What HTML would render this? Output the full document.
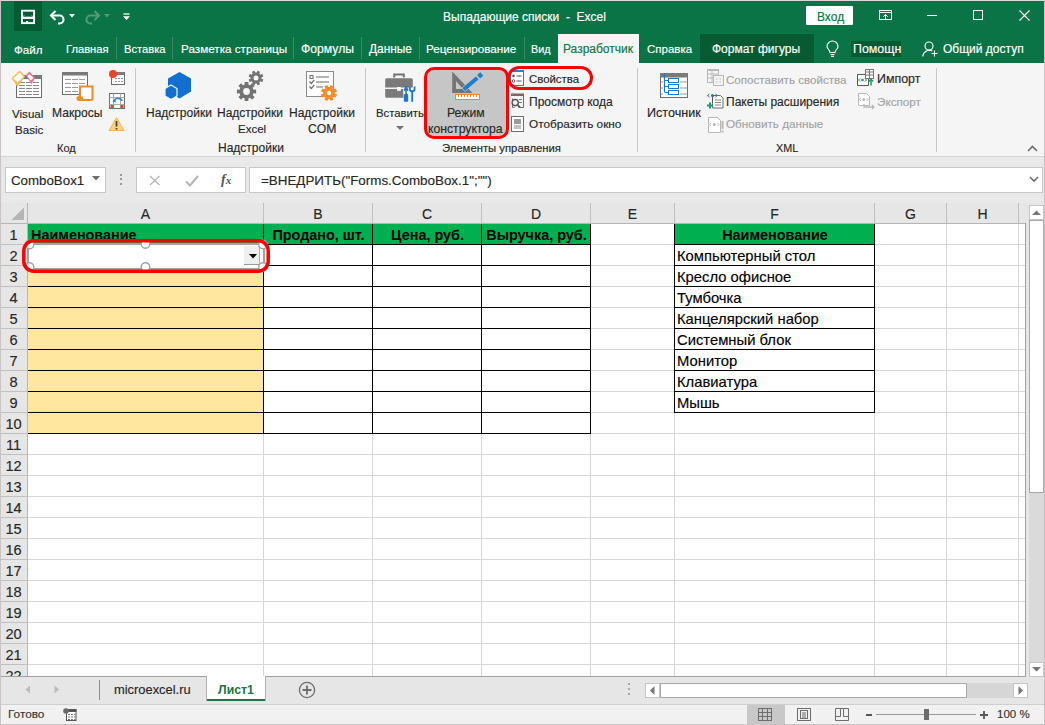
<!DOCTYPE html>
<html><head><meta charset="utf-8">
<style>
*{box-sizing:border-box}
html,body{margin:0;padding:0}
body{width:1045px;height:725px;overflow:hidden;position:relative;background:#e9e9e9;font-family:"Liberation Sans",sans-serif;color:#262626}
.a{position:absolute}
.t{position:absolute;white-space:nowrap;line-height:1;-webkit-text-stroke:0.15px currentColor}
.t[style*="font-weight:700"]{-webkit-text-stroke:0}
svg{overflow:visible}
</style></head><body>
<div class="a" style="left:0px;top:0px;width:1045px;height:725px;background:#e9e9e9;"></div>
<div class="a" style="left:0px;top:0px;width:1045px;height:1px;background:#e2d6dc;"></div>
<div class="a" style="left:0px;top:0px;width:1px;height:725px;background:#c9c3c6;"></div>
<div class="a" style="left:1044px;top:0px;width:1px;height:725px;background:#c9c3c6;"></div>
<div class="a" style="left:0px;top:724px;width:1045px;height:1px;background:#c9c3c6;"></div>
<div class="a" style="left:1px;top:1px;width:1043px;height:62px;background:#0b7447;"></div>
<div class="a" style="left:14px;top:1px;width:28px;height:30px;background:#075b33;"></div>
<svg class="a" style="left:20px;top:9px" width="16" height="16"><rect x="2" y="1.7" width="12.1" height="12.4" fill="none" stroke="#fff" stroke-width="1.9"/><rect x="1" y="7.7" width="14" height="2.3" fill="#fff"/><rect x="6" y="12" width="2.2" height="3" fill="#fff"/><path d="M3 7.7l1.2-1.3M13 7.7l-1.2-1.3" stroke="#fff" stroke-width="0.8"/></svg>
<svg class="a" style="left:49px;top:9px" width="17" height="15"><path d="M2.5 6.5h8a4 4 0 0 1 0 8h-1.5" fill="none" stroke="#fff" stroke-width="2.1"/><path d="M6.5 2L2 6.5 6.5 11" fill="none" stroke="#fff" stroke-width="2.1"/></svg>
<svg class="a" style="left:69px;top:14px" width="6" height="4"><path d="M0 0h6L3 3.5z" fill="#fff"/></svg>
<svg class="a" style="left:84px;top:9px" width="17" height="15"><path d="M14.5 6.5h-8a4 4 0 0 0 0 8h1.5" fill="none" stroke="#4f9c77" stroke-width="2.1"/><path d="M10.5 2L15 6.5 10.5 11" fill="none" stroke="#4f9c77" stroke-width="2.1"/></svg>
<svg class="a" style="left:104px;top:14px" width="6" height="4"><path d="M0 0h6L3 3.5z" fill="#4f9c77"/></svg>
<svg class="a" style="left:123px;top:13px" width="7" height="8"><path d="M0.5 1h6" stroke="#fff" stroke-width="1.3"/><path d="M0 3.2h7L3.5 7z" fill="#fff"/></svg>
<div class="t" style="left:443px;top:11px;font-size:12px;color:#fff;">Выпадающие списки&nbsp; -&nbsp; Excel</div>
<div class="a" style="left:806px;top:6px;width:47px;height:19px;background:#fff;border-radius:1px"></div>
<div class="t" style="left:817px;top:11px;font-size:12px;color:#0b7447;">Вход</div>
<svg class="a" style="left:879px;top:10px" width="14" height="11"><rect x="0.5" y="0.5" width="12" height="9" fill="none" stroke="#fff"/><path d="M0.5 2.5h12" stroke="#fff"/><path d="M6.5 9V4.5 M4.3 6.7l2.2-2.2 2.2 2.2" stroke="#fff" fill="none"/></svg>
<div class="a" style="left:927px;top:15px;width:10px;height:1px;background:#fff;"></div>
<div class="a" style="left:973px;top:10px;width:10px;height:10px;background:transparent;border:1px solid #fff"></div>
<svg class="a" style="left:1019px;top:10px" width="11" height="11"><path d="M0.5 0.5l10 10 M10.5 0.5l-10 10" stroke="#fff" stroke-width="1.1"/></svg>
<div class="t" style="left:14px;top:44px;font-size:11.6px;color:#fff;">Файл</div>
<div class="t" style="left:66px;top:44px;font-size:11.2px;color:#fff;">Главная</div>
<div class="a" style="left:116px;top:37px;width:1px;height:22px;background:#3e8b60;"></div>
<div class="t" style="left:124px;top:44px;font-size:11.2px;color:#fff;">Вставка</div>
<div class="a" style="left:172px;top:37px;width:1px;height:22px;background:#3e8b60;"></div>
<div class="t" style="left:181px;top:43px;font-size:11.7px;color:#fff;">Разметка страницы</div>
<div class="a" style="left:293px;top:37px;width:1px;height:22px;background:#3e8b60;"></div>
<div class="t" style="left:301px;top:43px;font-size:12.2px;color:#fff;">Формулы</div>
<div class="a" style="left:361px;top:37px;width:1px;height:22px;background:#3e8b60;"></div>
<div class="t" style="left:369px;top:44px;font-size:11.9px;color:#fff;">Данные</div>
<div class="a" style="left:419px;top:37px;width:1px;height:22px;background:#3e8b60;"></div>
<div class="t" style="left:426px;top:43px;font-size:11.7px;color:#fff;">Рецензирование</div>
<div class="a" style="left:524px;top:37px;width:1px;height:22px;background:#3e8b60;"></div>
<div class="t" style="left:531px;top:44px;font-size:10.8px;color:#fff;">Вид</div>
<div class="a" style="left:558px;top:34px;width:81px;height:29px;background:#f5f5f5;"></div>
<div class="t" style="left:563px;top:43px;font-size:12px;color:#0b7447;">Разработчик</div>
<div class="t" style="left:647px;top:44px;font-size:11.5px;color:#fff;">Справка</div>
<div class="a" style="left:700px;top:34px;width:114px;height:29px;background:#075b33;"></div>
<div class="t" style="left:712px;top:43px;font-size:12px;color:#fff;">Формат фигуры</div>
<svg class="a" style="left:826px;top:41px" width="13" height="16"><path d="M4 11.5C4 9 1 8 1 5.5a5.5 5.5 0 0 1 11 0C12 8 9 9 9 11.5z M4.5 13.5h4 M5 15.3h3" fill="none" stroke="#fff" stroke-width="1.15"/></svg>
<div class="a" style="left:851px;top:41px;width:50px;height:16px;background:#075b33;"></div>
<div class="t" style="left:853px;top:43px;font-size:12.4px;color:#fff;">Помощн</div>
<svg class="a" style="left:922px;top:41px" width="17" height="16"><circle cx="7" cy="5" r="4" fill="none" stroke="#fff" stroke-width="1.15"/><path d="M0.8 15.5a6.5 6.5 0 0 1 9.5-5.5 M12.5 9.5v6 M9.5 12.5h6" fill="none" stroke="#fff" stroke-width="1.15"/></svg>
<div class="t" style="left:943px;top:43px;font-size:12px;color:#fff;">Общий доступ</div>
<div class="a" style="left:1px;top:63px;width:1043px;height:93px;background:#f5f5f5;"></div>
<div class="a" style="left:1px;top:156px;width:1043px;height:1px;background:#d5d5d5;"></div>
<div class="a" style="left:135px;top:68px;width:1px;height:84px;background:#c8c8c8;"></div>
<div class="a" style="left:365px;top:68px;width:1px;height:84px;background:#c8c8c8;"></div>
<div class="a" style="left:637px;top:68px;width:1px;height:84px;background:#c8c8c8;"></div>
<div class="a" style="left:936px;top:68px;width:1px;height:84px;background:#c8c8c8;"></div>
<svg class="a" style="left:8px;top:66px" width="40" height="36"><rect x="8.5" y="9.5" width="25" height="22" fill="#fff" stroke="#6d6d6d"/>
<rect x="8" y="9" width="26" height="4" fill="#7a7a7a"/>
<path d="M11 16.5h6M18 16.5h6M25 16.5h6M11 19.5h6M18 19.5h6M25 19.5h6M11 22.5h6M18 22.5h6M25 22.5h6M11 25.5h6M18 25.5h6M25 25.5h6M11 28.5h6M18 28.5h6M25 28.5h6" stroke="#8a8a8a"/>
<path d="M11.7 4.5L17.2 10.2 9.3 20.8 3.6 12.3z" fill="#f7bd52"/>
<path d="M11.7 6.6L15.5 10.7 9.5 16.2 5.4 12.4z" fill="#fff"/>
<path d="M21.4 5.6L27.2 12 23.5 18.3 17.8 9.3z" fill="#ec7596"/>
<path d="M21.4 8.2L25.5 12 22.5 14.6 19.4 10z" fill="#fff"/></svg>
<div class="t" style="left:12px;top:108px;font-size:11.6px;color:#262626;">Visual</div>
<div class="t" style="left:15px;top:124px;font-size:11.6px;color:#262626;">Basic</div>
<svg class="a" style="left:58px;top:66px" width="40" height="36"><rect x="4.5" y="6.5" width="25" height="22" fill="#fff" stroke="#6d6d6d"/>
<rect x="4" y="6" width="26" height="3.5" fill="#7a7a7a"/>
<path d="M7 13.5h6M14 13.5h6M21 13.5h6M7 17.5h6M14 17.5h6M21 17.5h6M7 21.5h6M14 21.5h6M7 25.5h6M14 25.5h6" stroke="#9a9a9a"/>
<path d="M22 20.5h12.5v11.5a2 2 0 0 1-2 2H21a1.5 1.5 0 0 1 0-3h1z" fill="#fff" stroke="#f08a24" stroke-width="2"/>
<path d="M20 30.5h5v3h-5z" fill="#f08a24"/></svg>
<div class="t" style="left:52px;top:107px;font-size:12.1px;color:#262626;">Макросы</div>
<svg class="a" style="left:108px;top:69px" width="18" height="17"><rect x="3.5" y="3.5" width="13" height="12" fill="#fff" stroke="#6d6d6d"/><rect x="3" y="3" width="14" height="3" fill="#7a7a7a"/>
<path d="M7 9.5h2M10 9.5h2M13 9.5h2M7 12.5h2M10 12.5h2M13 12.5h2" stroke="#999"/>
<circle cx="5" cy="5" r="4" fill="#e8452a"/></svg>
<svg class="a" style="left:108px;top:92px" width="18" height="18"><rect x="1.5" y="1.5" width="15" height="15" fill="#fff" stroke="#6d6d6d"/>
<path d="M1.5 5.5h15M1.5 12.5h15M5.5 1.5v15M12.5 1.5v15" stroke="#aaa"/>
<path d="M6 10a4 3 0 0 1 8 -1" fill="none" stroke="#2a8ad4" stroke-width="1.6"/><path d="M4.5 9l3-1.5 0.5 3z" fill="#2a8ad4"/>
<rect x="2.5" y="13" width="3" height="3" fill="#e8452a"/><rect x="12.5" y="13" width="3" height="3" fill="#e8452a"/></svg>
<svg class="a" style="left:108px;top:116px" width="17" height="16"><path d="M8.5 1.5L16 14.5H1z" fill="#f9d37e" stroke="#f3b74a"/>
<path d="M8.5 5v5.5M8.5 12v1.5" stroke="#444" stroke-width="1.8"/></svg>
<div class="t" style="left:57px;top:143px;font-size:11px;color:#262626;">Код</div>
<svg class="a" style="left:162px;top:70px" width="32" height="32"><path d="M17.5 2l11.5 6.5v13L17.5 28.5 6 21.5v-13z" fill="#1170cf"/>
<path d="M9 15l6 3.5v7.5L9 29.5 3 26v-7.5z" fill="#1170cf" stroke="#f3f3f3" stroke-width="1.2"/></svg>
<div class="t" style="left:146px;top:107px;font-size:12px;color:#262626;">Надстройки</div>
<svg class="a" style="left:234px;top:68px" width="34" height="36"><path d="M27.45 10.75 L29.36 11.46 L28.24 14.17 L26.38 13.32 L25.32 14.38 L26.17 16.24 L23.46 17.36 L22.75 15.45 L21.25 15.45 L20.54 17.36 L17.83 16.24 L18.68 14.38 L17.62 13.32 L15.76 14.17 L14.64 11.46 L16.55 10.75 L16.55 9.25 L14.64 8.54 L15.76 5.83 L17.62 6.68 L18.68 5.62 L17.83 3.76 L20.54 2.64 L21.25 4.55 L22.75 4.55 L23.46 2.64 L26.17 3.76 L25.32 5.62 L26.38 6.68 L28.24 5.83 L29.36 8.54 L27.45 9.25z" fill="#737373"/><path d="M19.46 21.67 L22.11 21.59 L22.11 25.41 L19.46 25.33 L18.72 27.13 L20.65 28.94 L17.94 31.65 L16.13 29.72 L14.33 30.46 L14.41 33.11 L10.59 33.11 L10.67 30.46 L8.87 29.72 L7.06 31.65 L4.35 28.94 L6.28 27.13 L5.54 25.33 L2.89 25.41 L2.89 21.59 L5.54 21.67 L6.28 19.87 L4.35 18.06 L7.06 15.35 L8.87 17.28 L10.67 16.54 L10.59 13.89 L14.41 13.89 L14.33 16.54 L16.13 17.28 L17.94 15.35 L20.65 18.06 L18.72 19.87z" fill="#737373"/>
<circle cx="22" cy="10" r="2.5" fill="#f5f5f5"/><circle cx="12.5" cy="23.5" r="3.4" fill="#f5f5f5"/></svg>
<div class="t" style="left:217px;top:107px;font-size:12px;color:#262626;">Надстройки</div>
<div class="t" style="left:238px;top:124px;font-size:11.5px;color:#262626;">Excel</div>
<svg class="a" style="left:304px;top:69px" width="36" height="34"><rect x="2.5" y="2.5" width="27" height="25" fill="#fff" stroke="#8a8a8a"/>
<rect x="6" y="6.5" width="3" height="3" fill="none" stroke="#6d6d6d"/>
<path d="M12 8h13M12 13h13M12 18h7" stroke="#6d6d6d" stroke-width="1.2"/>
<path d="M5.5 12.5l1.8 2 3-3.5M5.5 17.5l1.8 2 3-3.5" fill="none" stroke="#6d6d6d" stroke-width="1.2"/>
<path d="M30.94 24.82 L33.04 25.60 L31.82 28.56 L29.78 27.63 L28.63 28.78 L29.56 30.82 L26.60 32.04 L25.82 29.94 L24.18 29.94 L23.40 32.04 L20.44 30.82 L21.37 28.78 L20.22 27.63 L18.18 28.56 L16.96 25.60 L19.06 24.82 L19.06 23.18 L16.96 22.40 L18.18 19.44 L20.22 20.37 L21.37 19.22 L20.44 17.18 L23.40 15.96 L24.18 18.06 L25.82 18.06 L26.60 15.96 L29.56 17.18 L28.63 19.22 L29.78 20.37 L31.82 19.44 L33.04 22.40 L30.94 23.18z" fill="#f58b2b"/>
<circle cx="25" cy="24" r="2.2" fill="#fff"/></svg>
<div class="t" style="left:289px;top:107px;font-size:12px;color:#262626;">Надстройки</div>
<div class="t" style="left:308px;top:123px;font-size:12.2px;color:#262626;">COM</div>
<div class="t" style="left:218px;top:142px;font-size:12px;color:#262626;">Надстройки</div>
<svg class="a" style="left:384px;top:72px" width="32" height="32"><path d="M10.2 5.5V2.5h9.6v3" fill="none" stroke="#737373" stroke-width="2"/>
<path d="M2.8 6.2h24.4a1.6 1.6 0 0 1 1.6 1.6v7.6H1.2V7.8a1.6 1.6 0 0 1 1.6-1.6z" fill="#7a7a7a"/>
<path d="M1.2 17.1h18.1v8.7H2.8a1.6 1.6 0 0 1-1.6-1.6z" fill="#7a7a7a"/>
<rect x="13.1" y="15" width="3.7" height="3.8" fill="#fff"/>
<path d="M21.4 14v3.5M22.9 14v3.5" stroke="#1a75c8" stroke-width="1.2"/>
<rect x="20" y="16.5" width="4.2" height="2.3" fill="#1a75c8"/><rect x="21.3" y="18.5" width="1.6" height="4" fill="#1a75c8"/>
<rect x="19.8" y="22" width="4.4" height="7.8" rx="1" fill="#1a75c8"/>
<path d="M25.8 14.5v2.5a2.4 2.4 0 0 0 4.8 0v-2.5" fill="none" stroke="#1a75c8" stroke-width="1.7"/>
<rect x="27.3" y="18.5" width="1.8" height="11.3" fill="#1a75c8"/></svg>
<div class="t" style="left:376px;top:108px;font-size:11.3px;color:#262626;">Вставить</div>
<svg class="a" style="left:396px;top:126px" width="8" height="5"><path d="M0 0h8L4 4z" fill="#737373"/></svg>
<div class="a" style="left:426px;top:69px;width:81px;height:68px;background:#c6c6c6;border-radius:6px"></div>
<div class="a" style="left:424px;top:67px;width:85px;height:72px;background:transparent;border:3px solid #ff0000;border-radius:10px"></div>
<svg class="a" style="left:448px;top:70px" width="36" height="32"><path d="M4.2 1.5V23H24.6z" fill="#757575"/><path d="M8 11v8h7z" fill="#c6c6c6"/>
<path d="M13.9 18.0 L28.0 6.0 L31.0 9.5 L16.9 21.5z" fill="#1a7fcf" stroke="#c6c6c6" stroke-width="0.8"/>
<path d="M12.4 22.4 L13.3 18.9 L16.0 22.0z" fill="#1a7fcf"/>
<path d="M29.1 5.0 L32.3 2.3 L35.3 5.7 L32.1 8.5z" fill="#1a7fcf"/>
<rect x="7.5" y="24.5" width="24" height="5" fill="#fff" stroke="#f08a24"/>
<path d="M10.5 25v2M13.5 25v2M16.5 25v2M19.5 25v2M22.5 25v2M25.5 25v2M28.5 25v2" stroke="#f08a24"/></svg>
<div class="t" style="left:447px;top:107px;font-size:12.2px;color:#262626;">Режим</div>
<div class="t" style="left:428px;top:123px;font-size:12.2px;color:#262626;">конструктора</div>
<svg class="a" style="left:510px;top:70px" width="14" height="16"><rect x="0.5" y="0.5" width="13" height="15" fill="#fff" stroke="#6d6d6d"/><rect x="0" y="0" width="14" height="2" fill="#1a86d0"/>
<circle cx="3.5" cy="6" r="1.3" fill="#555"/><circle cx="3.5" cy="11" r="1.3" fill="none" stroke="#555"/>
<path d="M6.5 6h5M6.5 11h5" stroke="#555"/></svg>
<div class="a" style="left:507px;top:66px;width:86px;height:24px;background:transparent;border:3px solid #ff0000;border-radius:12px"></div>
<div class="t" style="left:529px;top:74px;font-size:11.4px;color:#262626;">Свойства</div>
<svg class="a" style="left:510px;top:93px" width="16" height="16"><path d="M2.5 5.5V14.5h2M8.5 14.5h5V1.5" fill="none" stroke="#6d6d6d"/><rect x="1" y="0.5" width="13" height="2.5" fill="#6d6d6d"/>
<path d="M9 6.5h3M9 9.5h3" stroke="#777"/>
<circle cx="5.2" cy="9.6" r="3.1" fill="#f5f5f5" stroke="#555" stroke-width="1.4"/><path d="M7.5 11.9L10 14.4" stroke="#555" stroke-width="2"/></svg>
<div class="t" style="left:529px;top:96px;font-size:12px;color:#262626;">Просмотр кода</div>
<svg class="a" style="left:511px;top:116px" width="13" height="16"><rect x="0.5" y="0.5" width="12" height="15" fill="#fff" stroke="#6d6d6d"/>
<rect x="3" y="3" width="7" height="5" fill="#9a9a9a"/><rect x="3" y="9" width="7" height="4" fill="#c0c0c0"/></svg>
<div class="t" style="left:529px;top:119px;font-size:11.8px;color:#262626;">Отобразить окно</div>
<div class="t" style="left:442px;top:143px;font-size:11.3px;color:#262626;">Элементы управления</div>
<svg class="a" style="left:659px;top:72px" width="30" height="27"><rect x="1.5" y="1.5" width="27" height="24" fill="#fff" stroke="#6d6d6d"/>
<rect x="1" y="1" width="28" height="4.5" fill="#7a7a7a"/>
<path d="M5.5 1v19M5.5 8.5h4M5.5 14.5h4M5.5 20.5h4" stroke="#1a7ac8" stroke-width="1.2" fill="none"/>
<rect x="9.5" y="6.5" width="10" height="4" fill="#fff" stroke="#1a7ac8"/>
<rect x="9.5" y="12.5" width="10" height="4" fill="#fff" stroke="#1a7ac8"/>
<rect x="9.5" y="18.5" width="10" height="4" fill="#fff" stroke="#1a7ac8"/>
<path d="M21 10h7M21 16h7M21 22h7M2 10h2M2 16h2M2 22h2" stroke="#999"/></svg>
<div class="t" style="left:647px;top:107px;font-size:12.6px;color:#262626;">Источник</div>
<svg class="a" style="left:707px;top:69px" width="17" height="17"><g fill="none" stroke="#b8b8b8"><rect x="0.5" y="0.5" width="11" height="13"/><path d="M0.5 5h11M0.5 9h11M5 1v13"/><rect x="6.5" y="6.5" width="10" height="10" fill="#f3f3f3"/><path d="M9 10h1.5M12.5 10h1.5M9 13h1.5M12.5 13h1.5"/></g>
<rect x="0" y="0" width="12" height="2" fill="#b8b8b8"/></svg>
<div class="t" style="left:726px;top:74px;font-size:11.6px;color:#a3a3a3;">Сопоставить свойства</div>
<svg class="a" style="left:707px;top:92px" width="17" height="17"><path d="M5.5 3.5h8l2.5 2.5v10h-10.5z" fill="#fff" stroke="#6d6d6d"/>
<path d="M8 8h6M8 10.5h6M8 13h6" stroke="#888"/>
<path d="M2.5 2l-2 1.5 2 1.5M8.5 2l2 1.5-2 1.5" fill="none" stroke="#555" stroke-width="0.9"/>
<circle cx="5.5" cy="3.5" r="1.6" fill="#1a7ac8"/><path d="M5.5 5.5v5" stroke="#555"/>
<path d="M3 10.5v6M0 13.5h6" stroke="#1b9e6e" stroke-width="2"/></svg>
<div class="t" style="left:726px;top:96px;font-size:12px;color:#262626;">Пакеты расширения</div>
<svg class="a" style="left:708px;top:117px" width="16" height="16"><path d="M0.5 0.5h9l3 3v12h-12z" fill="#fff" stroke="#b8b8b8"/>
<path d="M3 6l-1.5 1.5L3 9M9.5 6L11 7.5 9.5 9" fill="none" stroke="#b8b8b8"/><circle cx="6.3" cy="7.5" r="1.5" fill="#b8b8b8"/>
<path d="M14.5 4v8M14.5 13.5v2" stroke="#b8b8b8" stroke-width="2"/></svg>
<div class="t" style="left:726px;top:118px;font-size:11.7px;color:#a3a3a3;">Обновить данные</div>
<div class="t" style="left:776px;top:143px;font-size:10.8px;color:#262626;">XML</div>
<svg class="a" style="left:857px;top:69px" width="18" height="17"><path d="M0.5 5.5h9l2 2v9h-11z" fill="#fff" stroke="#555"/>
<rect x="8.5" y="0.5" width="8" height="9" fill="#fff" stroke="#777"/><path d="M8.5 3h8M8.5 6h8M12.5 1v8" stroke="#777"/>
<path d="M3 9.5l-1.5 1.5L3 12.5M8 9.5l1.5 1.5L8 12.5" fill="none" stroke="#555" stroke-width="0.9"/><circle cx="5.5" cy="11" r="1.3" fill="#1a7ac8"/>
<path d="M14 16.5v-6M11.8 12.5l2.2-2.2 2.2 2.2" stroke="#1b9e6e" stroke-width="1.6" fill="none"/></svg>
<div class="t" style="left:877px;top:73px;font-size:12.4px;color:#262626;">Импорт</div>
<svg class="a" style="left:858px;top:93px" width="18" height="17"><path d="M0.5 0.5h8l3 3v9h-11z" fill="#fff" stroke="#b8b8b8"/>
<path d="M3 5l-1.5 1.5L3 8M8.5 5L10 6.5 8.5 8" fill="none" stroke="#b8b8b8"/><circle cx="5.8" cy="6.5" r="1.4" fill="#b8b8b8"/>
<path d="M6 11v3h10M14 12l2 2-2 2" fill="none" stroke="#b8b8b8" stroke-width="1.3"/></svg>
<div class="t" style="left:877px;top:96px;font-size:11.7px;color:#a3a3a3;">Экспорт</div>
<svg class="a" style="left:1027px;top:145px" width="11" height="7"><path d="M1 6l4.5-4.5L10 6" fill="none" stroke="#6d6d6d" stroke-width="1.6"/></svg>
<div class="a" style="left:1px;top:157px;width:1043px;height:46px;background:#e9e9e9;"></div>
<div class="a" style="left:5px;top:167px;width:101px;height:26px;background:#fff;border:1px solid #c8c8c8"></div>
<div class="t" style="left:11px;top:174px;font-size:13.3px;color:#262626;">ComboBox1</div>
<svg class="a" style="left:92px;top:176px" width="8" height="5"><path d="M0 0h8L4 4.5z" fill="#6d6d6d"/></svg>
<div class="a" style="left:120px;top:174px;width:2px;height:2px;background:#9a9a9a;"></div>
<div class="a" style="left:120px;top:178px;width:2px;height:2px;background:#9a9a9a;"></div>
<div class="a" style="left:120px;top:183px;width:2px;height:2px;background:#9a9a9a;"></div>
<div class="a" style="left:136px;top:167px;width:110px;height:26px;background:#fff;border:1px solid #c8c8c8"></div>
<svg class="a" style="left:149px;top:175px" width="12" height="11"><path d="M1 1l9.5 9M10.5 1L1 10" stroke="#b5b5b5" stroke-width="1.3"/></svg>
<svg class="a" style="left:185px;top:175px" width="14" height="12"><path d="M1 6.5l4 4 8-9.5" fill="none" stroke="#b5b5b5" stroke-width="2"/></svg>
<div class="t" style="left:221px;top:173px;font-size:14px;color:#555;font-weight:700;font-family:'Liberation Serif',serif;font-style:italic;">f<span style="font-size:11px">x</span></div>
<div class="a" style="left:249px;top:167px;width:794px;height:26px;background:#fff;border:1px solid #c8c8c8"></div>
<div class="t" style="left:261px;top:174px;font-size:13.4px;color:#262626;">=ВНЕДРИТЬ("Forms.ComboBox.1";"")</div>
<svg class="a" style="left:1029px;top:176px" width="10" height="7"><path d="M1 1l4 4 4-4" fill="none" stroke="#6d6d6d" stroke-width="1.6"/></svg>
<div class="a" style="left:1px;top:203px;width:1025px;height:21px;background:#e6e6e6;"></div>
<div class="a" style="left:1px;top:224px;width:27px;height:452px;background:#e6e6e6;"></div>
<div class="a" style="left:28px;top:224px;width:997px;height:452px;background:#fff;"></div>
<svg class="a" style="left:11px;top:207px" width="14" height="14"><path d="M13 0.5V13H0.5z" fill="#b4b4b4"/></svg>
<div class="a" style="left:28px;top:224px;width:562px;height:20px;background:#00b050;"></div>
<div class="a" style="left:675px;top:224px;width:199px;height:20px;background:#00b050;"></div>
<div class="a" style="left:28px;top:245px;width:235px;height:188px;background:#ffe79f;"></div>
<div class="a" style="left:28px;top:244px;width:997px;height:1px;background:#d6d6d6;"></div>
<div class="a" style="left:1px;top:244px;width:27px;height:1px;background:#c0c0c0;"></div>
<div class="a" style="left:28px;top:265px;width:997px;height:1px;background:#d6d6d6;"></div>
<div class="a" style="left:1px;top:265px;width:27px;height:1px;background:#c0c0c0;"></div>
<div class="a" style="left:28px;top:286px;width:997px;height:1px;background:#d6d6d6;"></div>
<div class="a" style="left:1px;top:286px;width:27px;height:1px;background:#c0c0c0;"></div>
<div class="a" style="left:28px;top:307px;width:997px;height:1px;background:#d6d6d6;"></div>
<div class="a" style="left:1px;top:307px;width:27px;height:1px;background:#c0c0c0;"></div>
<div class="a" style="left:28px;top:328px;width:997px;height:1px;background:#d6d6d6;"></div>
<div class="a" style="left:1px;top:328px;width:27px;height:1px;background:#c0c0c0;"></div>
<div class="a" style="left:28px;top:349px;width:997px;height:1px;background:#d6d6d6;"></div>
<div class="a" style="left:1px;top:349px;width:27px;height:1px;background:#c0c0c0;"></div>
<div class="a" style="left:28px;top:370px;width:997px;height:1px;background:#d6d6d6;"></div>
<div class="a" style="left:1px;top:370px;width:27px;height:1px;background:#c0c0c0;"></div>
<div class="a" style="left:28px;top:391px;width:997px;height:1px;background:#d6d6d6;"></div>
<div class="a" style="left:1px;top:391px;width:27px;height:1px;background:#c0c0c0;"></div>
<div class="a" style="left:28px;top:412px;width:997px;height:1px;background:#d6d6d6;"></div>
<div class="a" style="left:1px;top:412px;width:27px;height:1px;background:#c0c0c0;"></div>
<div class="a" style="left:28px;top:433px;width:997px;height:1px;background:#d6d6d6;"></div>
<div class="a" style="left:1px;top:433px;width:27px;height:1px;background:#c0c0c0;"></div>
<div class="a" style="left:28px;top:454px;width:997px;height:1px;background:#d6d6d6;"></div>
<div class="a" style="left:1px;top:454px;width:27px;height:1px;background:#c0c0c0;"></div>
<div class="a" style="left:28px;top:475px;width:997px;height:1px;background:#d6d6d6;"></div>
<div class="a" style="left:1px;top:475px;width:27px;height:1px;background:#c0c0c0;"></div>
<div class="a" style="left:28px;top:496px;width:997px;height:1px;background:#d6d6d6;"></div>
<div class="a" style="left:1px;top:496px;width:27px;height:1px;background:#c0c0c0;"></div>
<div class="a" style="left:28px;top:517px;width:997px;height:1px;background:#d6d6d6;"></div>
<div class="a" style="left:1px;top:517px;width:27px;height:1px;background:#c0c0c0;"></div>
<div class="a" style="left:28px;top:538px;width:997px;height:1px;background:#d6d6d6;"></div>
<div class="a" style="left:1px;top:538px;width:27px;height:1px;background:#c0c0c0;"></div>
<div class="a" style="left:28px;top:559px;width:997px;height:1px;background:#d6d6d6;"></div>
<div class="a" style="left:1px;top:559px;width:27px;height:1px;background:#c0c0c0;"></div>
<div class="a" style="left:28px;top:580px;width:997px;height:1px;background:#d6d6d6;"></div>
<div class="a" style="left:1px;top:580px;width:27px;height:1px;background:#c0c0c0;"></div>
<div class="a" style="left:28px;top:601px;width:997px;height:1px;background:#d6d6d6;"></div>
<div class="a" style="left:1px;top:601px;width:27px;height:1px;background:#c0c0c0;"></div>
<div class="a" style="left:28px;top:622px;width:997px;height:1px;background:#d6d6d6;"></div>
<div class="a" style="left:1px;top:622px;width:27px;height:1px;background:#c0c0c0;"></div>
<div class="a" style="left:28px;top:643px;width:997px;height:1px;background:#d6d6d6;"></div>
<div class="a" style="left:1px;top:643px;width:27px;height:1px;background:#c0c0c0;"></div>
<div class="a" style="left:28px;top:664px;width:997px;height:1px;background:#d6d6d6;"></div>
<div class="a" style="left:1px;top:664px;width:27px;height:1px;background:#c0c0c0;"></div>
<div class="a" style="left:263px;top:224px;width:1px;height:452px;background:#d6d6d6;"></div>
<div class="a" style="left:263px;top:203px;width:1px;height:21px;background:#c0c0c0;"></div>
<div class="t" style="left:28px;top:207px;font-size:14px;color:#262626;width:235px;text-align:center;">A</div>
<div class="a" style="left:372px;top:224px;width:1px;height:452px;background:#d6d6d6;"></div>
<div class="a" style="left:372px;top:203px;width:1px;height:21px;background:#c0c0c0;"></div>
<div class="t" style="left:264px;top:207px;font-size:14px;color:#262626;width:108px;text-align:center;">B</div>
<div class="a" style="left:481px;top:224px;width:1px;height:452px;background:#d6d6d6;"></div>
<div class="a" style="left:481px;top:203px;width:1px;height:21px;background:#c0c0c0;"></div>
<div class="t" style="left:373px;top:207px;font-size:14px;color:#262626;width:108px;text-align:center;">C</div>
<div class="a" style="left:590px;top:224px;width:1px;height:452px;background:#d6d6d6;"></div>
<div class="a" style="left:590px;top:203px;width:1px;height:21px;background:#c0c0c0;"></div>
<div class="t" style="left:482px;top:207px;font-size:14px;color:#262626;width:108px;text-align:center;">D</div>
<div class="a" style="left:674px;top:224px;width:1px;height:452px;background:#d6d6d6;"></div>
<div class="a" style="left:674px;top:203px;width:1px;height:21px;background:#c0c0c0;"></div>
<div class="t" style="left:591px;top:207px;font-size:14px;color:#262626;width:83px;text-align:center;">E</div>
<div class="a" style="left:874px;top:224px;width:1px;height:452px;background:#d6d6d6;"></div>
<div class="a" style="left:874px;top:203px;width:1px;height:21px;background:#c0c0c0;"></div>
<div class="t" style="left:675px;top:207px;font-size:14px;color:#262626;width:199px;text-align:center;">F</div>
<div class="a" style="left:946px;top:224px;width:1px;height:452px;background:#d6d6d6;"></div>
<div class="a" style="left:946px;top:203px;width:1px;height:21px;background:#c0c0c0;"></div>
<div class="t" style="left:875px;top:207px;font-size:14px;color:#262626;width:71px;text-align:center;">G</div>
<div class="a" style="left:1018px;top:224px;width:1px;height:452px;background:#d6d6d6;"></div>
<div class="a" style="left:1018px;top:203px;width:1px;height:21px;background:#c0c0c0;"></div>
<div class="t" style="left:947px;top:207px;font-size:14px;color:#262626;width:71px;text-align:center;">H</div>
<div class="a" style="left:1px;top:223px;width:1025px;height:1px;background:#b5b5b5;"></div>
<div class="a" style="left:27px;top:203px;width:1px;height:473px;background:#b5b5b5;"></div>
<div class="a" style="left:1px;top:224px;width:26px;height:452px;overflow:hidden">
<div class="t" style="left:-1px;top:4px;font-size:14.6px;color:#262626;width:27px;text-align:center;">1</div>
<div class="t" style="left:-1px;top:25px;font-size:14.6px;color:#262626;width:27px;text-align:center;">2</div>
<div class="t" style="left:-1px;top:46px;font-size:14.6px;color:#262626;width:27px;text-align:center;">3</div>
<div class="t" style="left:-1px;top:67px;font-size:14.6px;color:#262626;width:27px;text-align:center;">4</div>
<div class="t" style="left:-1px;top:88px;font-size:14.6px;color:#262626;width:27px;text-align:center;">5</div>
<div class="t" style="left:-1px;top:109px;font-size:14.6px;color:#262626;width:27px;text-align:center;">6</div>
<div class="t" style="left:-1px;top:130px;font-size:14.6px;color:#262626;width:27px;text-align:center;">7</div>
<div class="t" style="left:-1px;top:151px;font-size:14.6px;color:#262626;width:27px;text-align:center;">8</div>
<div class="t" style="left:-1px;top:172px;font-size:14.6px;color:#262626;width:27px;text-align:center;">9</div>
<div class="t" style="left:-1px;top:193px;font-size:14.6px;color:#262626;width:27px;text-align:center;">10</div>
<div class="t" style="left:-1px;top:214px;font-size:14.6px;color:#262626;width:27px;text-align:center;">11</div>
<div class="t" style="left:-1px;top:235px;font-size:14.6px;color:#262626;width:27px;text-align:center;">12</div>
<div class="t" style="left:-1px;top:256px;font-size:14.6px;color:#262626;width:27px;text-align:center;">13</div>
<div class="t" style="left:-1px;top:277px;font-size:14.6px;color:#262626;width:27px;text-align:center;">14</div>
<div class="t" style="left:-1px;top:298px;font-size:14.6px;color:#262626;width:27px;text-align:center;">15</div>
<div class="t" style="left:-1px;top:319px;font-size:14.6px;color:#262626;width:27px;text-align:center;">16</div>
<div class="t" style="left:-1px;top:340px;font-size:14.6px;color:#262626;width:27px;text-align:center;">17</div>
<div class="t" style="left:-1px;top:361px;font-size:14.6px;color:#262626;width:27px;text-align:center;">18</div>
<div class="t" style="left:-1px;top:382px;font-size:14.6px;color:#262626;width:27px;text-align:center;">19</div>
<div class="t" style="left:-1px;top:403px;font-size:14.6px;color:#262626;width:27px;text-align:center;">20</div>
<div class="t" style="left:-1px;top:424px;font-size:14.6px;color:#262626;width:27px;text-align:center;">21</div>
<div class="t" style="left:-1px;top:445px;font-size:14.6px;color:#262626;width:27px;text-align:center;">22</div>
</div>
<div class="a" style="left:28px;top:244px;width:563px;height:1px;background:#000;"></div>
<div class="a" style="left:28px;top:265px;width:563px;height:1px;background:#000;"></div>
<div class="a" style="left:28px;top:286px;width:563px;height:1px;background:#000;"></div>
<div class="a" style="left:28px;top:307px;width:563px;height:1px;background:#000;"></div>
<div class="a" style="left:28px;top:328px;width:563px;height:1px;background:#000;"></div>
<div class="a" style="left:28px;top:349px;width:563px;height:1px;background:#000;"></div>
<div class="a" style="left:28px;top:370px;width:563px;height:1px;background:#000;"></div>
<div class="a" style="left:28px;top:391px;width:563px;height:1px;background:#000;"></div>
<div class="a" style="left:28px;top:412px;width:563px;height:1px;background:#000;"></div>
<div class="a" style="left:28px;top:433px;width:563px;height:1px;background:#000;"></div>
<div class="a" style="left:263px;top:224px;width:1px;height:210px;background:#000;"></div>
<div class="a" style="left:372px;top:224px;width:1px;height:210px;background:#000;"></div>
<div class="a" style="left:481px;top:224px;width:1px;height:210px;background:#000;"></div>
<div class="a" style="left:590px;top:224px;width:1px;height:210px;background:#000;"></div>
<div class="a" style="left:674px;top:244px;width:201px;height:1px;background:#000;"></div>
<div class="a" style="left:674px;top:265px;width:201px;height:1px;background:#000;"></div>
<div class="a" style="left:674px;top:286px;width:201px;height:1px;background:#000;"></div>
<div class="a" style="left:674px;top:307px;width:201px;height:1px;background:#000;"></div>
<div class="a" style="left:674px;top:328px;width:201px;height:1px;background:#000;"></div>
<div class="a" style="left:674px;top:349px;width:201px;height:1px;background:#000;"></div>
<div class="a" style="left:674px;top:370px;width:201px;height:1px;background:#000;"></div>
<div class="a" style="left:674px;top:391px;width:201px;height:1px;background:#000;"></div>
<div class="a" style="left:674px;top:412px;width:201px;height:1px;background:#000;"></div>
<div class="a" style="left:674px;top:224px;width:1px;height:189px;background:#000;"></div>
<div class="a" style="left:874px;top:224px;width:1px;height:189px;background:#000;"></div>
<div class="t" style="left:31px;top:228px;font-size:14.4px;color:#000;font-weight:700;">Наименование</div>
<div class="t" style="left:264px;top:228px;font-size:14.4px;color:#000;font-weight:700;width:109px;text-align:center;">Продано, шт.</div>
<div class="t" style="left:373px;top:228px;font-size:14.4px;color:#000;font-weight:700;width:109px;text-align:center;">Цена, руб.</div>
<div class="t" style="left:482px;top:228px;font-size:14.4px;color:#000;font-weight:700;width:109px;text-align:center;">Выручка, руб.</div>
<div class="t" style="left:675px;top:228px;font-size:14.4px;color:#000;font-weight:700;width:200px;text-align:center;">Наименование</div>
<div class="t" style="left:677px;top:249px;font-size:14.8px;color:#000;">Компьютерный стол</div>
<div class="t" style="left:677px;top:270px;font-size:14.8px;color:#000;">Кресло офисное</div>
<div class="t" style="left:677px;top:291px;font-size:14.8px;color:#000;">Тумбочка</div>
<div class="t" style="left:677px;top:312px;font-size:14.8px;color:#000;">Канцелярский набор</div>
<div class="t" style="left:677px;top:333px;font-size:14.8px;color:#000;">Системный блок</div>
<div class="t" style="left:677px;top:354px;font-size:14.8px;color:#000;">Монитор</div>
<div class="t" style="left:677px;top:375px;font-size:14.8px;color:#000;">Клавиатура</div>
<div class="t" style="left:677px;top:396px;font-size:14.8px;color:#000;">Мышь</div>
<div class="a" style="left:1025px;top:223px;width:1px;height:454px;background:#a0a0a0;"></div>
<div class="a" style="left:1px;top:676px;width:1025px;height:1px;background:#a0a0a0;"></div>
<div class="a" style="left:27px;top:243px;width:238px;height:27px;background:#fff;border:2.5px solid #a3a3a3"></div>
<div class="a" style="left:30px;top:265px;width:232px;height:2px;background:#fff;"></div>
<div class="a" style="left:244px;top:246px;width:15px;height:19px;background:#efefef;border-bottom:1px solid #9a9a9a"></div>
<svg class="a" style="left:249px;top:254px" width="8" height="5"><path d="M0 0h8L4 4.5z" fill="#000"/></svg>
<div class="a" style="left:259px;top:246px;width:1px;height:21px;background:#b0b0b0;"></div>
<svg class="a" style="left:20px;top:236px" width="260" height="42" viewBox="20 236 260 42"><g fill="#fff" stroke="#a3a3a3" stroke-width="1.4">
<circle cx="29.5" cy="244.5" r="4.3"/><circle cx="145.5" cy="244" r="4.3"/><circle cx="263" cy="244.5" r="4.3"/>
<circle cx="29.5" cy="267" r="4.3"/><circle cx="145.5" cy="267" r="4.3"/><circle cx="263" cy="267" r="4.3"/>
</g>
<rect x="23.8" y="240.8" width="244.4" height="30.4" rx="10" ry="10" fill="none" stroke="#ff0000" stroke-width="3.5"/></svg>
<div class="a" style="left:1026px;top:203px;width:18px;height:474px;background:#e6e6e6;"></div>
<div class="a" style="left:1029px;top:493px;width:15px;height:169px;background:#dadada;"></div>
<div class="a" style="left:1029px;top:205px;width:15px;height:15px;background:#fff;border:1px solid #c6c6c6"></div>
<svg class="a" style="left:1032px;top:210px" width="9" height="5"><path d="M0 5h9L4.5 0.5z" fill="#777"/></svg>
<div class="a" style="left:1029px;top:220px;width:15px;height:273px;background:#fff;border:1px solid #a8a8a8"></div>
<div class="a" style="left:1029px;top:662px;width:15px;height:15px;background:#fff;border:1px solid #c6c6c6"></div>
<svg class="a" style="left:1032px;top:667px" width="9" height="5"><path d="M0 0h9L4.5 4.5z" fill="#777"/></svg>
<div class="a" style="left:1px;top:677px;width:1043px;height:27px;background:#e6e6e6;"></div>
<svg class="a" style="left:25px;top:685px" width="6" height="9"><path d="M5 0.5v8L0.5 4.5z" fill="#bcbcbc"/></svg>
<svg class="a" style="left:54px;top:685px" width="6" height="9"><path d="M0.5 0.5v8L5 4.5z" fill="#bcbcbc"/></svg>
<div class="a" style="left:99px;top:680px;width:1px;height:20px;background:#8c8c8c;"></div>
<div class="t" style="left:114px;top:684px;font-size:12.9px;color:#262626;">microexcel.ru</div>
<div class="a" style="left:206px;top:676px;width:60px;height:25px;background:#fff;border-left:1px solid #b0b0b0;border-right:1px solid #b0b0b0"></div>
<div class="a" style="left:207px;top:699px;width:58px;height:2px;background:#217346;"></div>
<div class="t" style="left:218px;top:684px;font-size:12.3px;color:#217346;font-weight:700;">Лист1</div>
<svg class="a" style="left:298px;top:681px" width="18" height="18"><circle cx="9" cy="9" r="7.6" fill="none" stroke="#6d6d6d" stroke-width="1.3"/><path d="M9 4.5v9M4.5 9h9" stroke="#6d6d6d" stroke-width="1.8"/></svg>
<div class="a" style="left:628px;top:683px;width:2px;height:2px;background:#a8a8a8;"></div>
<div class="a" style="left:628px;top:688px;width:2px;height:2px;background:#a8a8a8;"></div>
<div class="a" style="left:628px;top:693px;width:2px;height:2px;background:#a8a8a8;"></div>
<div class="a" style="left:645px;top:683px;width:383px;height:15px;background:#d6d6d6;"></div>
<div class="a" style="left:645px;top:683px;width:15px;height:15px;background:#fff;border:1px solid #c6c6c6"></div>
<svg class="a" style="left:650px;top:686px" width="5" height="9"><path d="M4.5 0v9L0 4.5z" fill="#777"/></svg>
<div class="a" style="left:660px;top:683px;width:307px;height:15px;background:#fff;border:1px solid #a8a8a8"></div>
<div class="a" style="left:1013px;top:683px;width:15px;height:15px;background:#fff;border:1px solid #c6c6c6"></div>
<svg class="a" style="left:1018px;top:686px" width="5" height="9"><path d="M0.5 0v9L5 4.5z" fill="#777"/></svg>
<div class="a" style="left:1px;top:704px;width:1043px;height:1px;background:#cfcfcf;"></div>
<div class="a" style="left:1px;top:705px;width:1043px;height:19px;background:#f1f1f1;"></div>
<div class="t" style="left:8px;top:709px;font-size:11.8px;color:#333;">Готово</div>
<svg class="a" style="left:63px;top:708px" width="14" height="13"><rect x="3.5" y="1.5" width="9.5" height="11" fill="#fff" stroke="#555"/><rect x="3" y="1" width="10.5" height="3" fill="#555"/><path d="M5 6.5h2M8 6.5h2M11 6.5h1.5M5 9h2M8 9h2M11 9h1.5M5 11.5h2M8 11.5h2M11 11.5h1.5" stroke="#777"/><circle cx="3" cy="3" r="2.8" fill="#6a6a6a"/></svg>
<div class="a" style="left:747px;top:705px;width:38px;height:19px;background:#c8c8c8;"></div>
<svg class="a" style="left:758px;top:708px" width="15" height="13"><rect x="0.5" y="0.5" width="13" height="12" fill="none" stroke="#6d6d6d"/><path d="M0.5 4.5h13M0.5 8.5h13M4.5 0.5v12M9.5 0.5v12" stroke="#6d6d6d"/></svg>
<svg class="a" style="left:797px;top:708px" width="15" height="13"><rect x="0.5" y="0.5" width="13" height="12" fill="none" stroke="#6d6d6d"/><rect x="3.5" y="2.5" width="7" height="8" fill="none" stroke="#6d6d6d"/><path d="M5 5h4M5 7h4M5 9h4" stroke="#6d6d6d"/></svg>
<svg class="a" style="left:835px;top:708px" width="15" height="13"><path d="M0.5 0.5h13v12h-13z M0.5 8.5h5V0.5 M8.5 0.5v8h5" fill="none" stroke="#6d6d6d"/></svg>
<div class="a" style="left:866px;top:714px;width:6px;height:2px;background:#555;"></div>
<div class="a" style="left:876px;top:714px;width:100px;height:1px;background:#9a9a9a;"></div>
<div class="a" style="left:924px;top:709px;width:5px;height:11px;background:#6d6d6d;"></div>
<svg class="a" style="left:980px;top:711px" width="8" height="8"><path d="M4 0v8M0 4h8" stroke="#555" stroke-width="1.8"/></svg>
<div class="t" style="left:997px;top:709px;font-size:11.5px;color:#333;">100 %</div>
</body></html>
